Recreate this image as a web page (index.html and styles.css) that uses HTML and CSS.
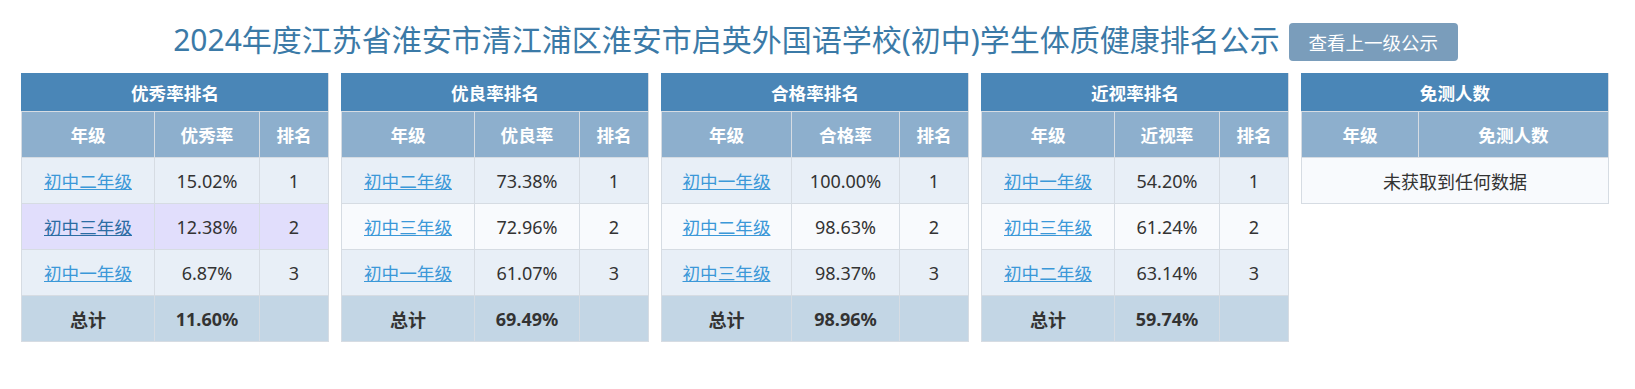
FILE: index.html
```html
<!DOCTYPE html>
<html lang="zh-CN">
<head>
<meta charset="utf-8">
<title>体质健康排名公示</title>
<link rel="stylesheet" href="styles.css">
</head>
<body>
<div class="top">
  <h1 class="title">2024年度江苏省淮安市清江浦区淮安市启英外国语学校(初中)学生体质健康排名公示</h1>
  <a class="btn" href="#">查看上一级公示</a>
</div>
<div class="tables">
  <table class="rank">
    <thead>
      <tr class="cap"><th colspan="3">优秀率排名</th></tr>
      <tr class="sub"><th class="c-grade">年级</th><th>优秀率</th><th class="c-rank">排名</th></tr>
    </thead>
    <tbody>
      <tr class="odd"><td><a href="#">初中二年级</a></td><td>15.02%</td><td>1</td></tr>
      <tr class="hover"><td><a href="#">初中三年级</a></td><td>12.38%</td><td>2</td></tr>
      <tr class="odd"><td><a href="#">初中一年级</a></td><td>6.87%</td><td>3</td></tr>
      <tr class="total"><td>总计</td><td>11.60%</td><td></td></tr>
    </tbody>
  </table>
  <table class="rank">
    <thead>
      <tr class="cap"><th colspan="3">优良率排名</th></tr>
      <tr class="sub"><th class="c-grade">年级</th><th>优良率</th><th class="c-rank">排名</th></tr>
    </thead>
    <tbody>
      <tr class="odd"><td><a href="#">初中二年级</a></td><td>73.38%</td><td>1</td></tr>
      <tr class="even"><td><a href="#">初中三年级</a></td><td>72.96%</td><td>2</td></tr>
      <tr class="odd"><td><a href="#">初中一年级</a></td><td>61.07%</td><td>3</td></tr>
      <tr class="total"><td>总计</td><td>69.49%</td><td></td></tr>
    </tbody>
  </table>
  <table class="rank">
    <thead>
      <tr class="cap"><th colspan="3">合格率排名</th></tr>
      <tr class="sub"><th class="c-grade narrow">年级</th><th>合格率</th><th class="c-rank">排名</th></tr>
    </thead>
    <tbody>
      <tr class="odd"><td><a href="#">初中一年级</a></td><td>100.00%</td><td>1</td></tr>
      <tr class="even"><td><a href="#">初中二年级</a></td><td>98.63%</td><td>2</td></tr>
      <tr class="odd"><td><a href="#">初中三年级</a></td><td>98.37%</td><td>3</td></tr>
      <tr class="total"><td>总计</td><td>98.96%</td><td></td></tr>
    </tbody>
  </table>
  <table class="rank">
    <thead>
      <tr class="cap"><th colspan="3">近视率排名</th></tr>
      <tr class="sub"><th class="c-grade">年级</th><th>近视率</th><th class="c-rank">排名</th></tr>
    </thead>
    <tbody>
      <tr class="odd"><td><a href="#">初中一年级</a></td><td>54.20%</td><td>1</td></tr>
      <tr class="even"><td><a href="#">初中三年级</a></td><td>61.24%</td><td>2</td></tr>
      <tr class="odd"><td><a href="#">初中二年级</a></td><td>63.14%</td><td>3</td></tr>
      <tr class="total"><td>总计</td><td>59.74%</td><td></td></tr>
    </tbody>
  </table>
  <table class="rank exempt">
    <thead>
      <tr class="cap"><th colspan="2">免测人数</th></tr>
      <tr class="sub"><th class="w-grade">年级</th><th>免测人数</th></tr>
    </thead>
    <tbody>
      <tr class="even"><td colspan="2">未获取到任何数据</td></tr>
    </tbody>
  </table>
</div>
</body>
</html>
```
FILE: styles.css
```css
html, body {
  margin: 0;
  padding: 0;
  background: #ffffff;
}
body {
  font-family: "Noto Sans", "Noto Sans CJK SC", sans-serif;
  color: #333333;
}
.top {
  display: flex;
  justify-content: center;
  align-items: flex-start;
  gap: 9px;
  margin-top: 23px;
  height: 38px;
  padding-right: 4px;
}
.title {
  margin: 0;
  font-size: 30px;
  line-height: 34px;
  font-weight: normal;
  color: #3b7aa7;
  white-space: nowrap;
}
.btn {
  display: inline-flex;
  align-items: center;
  justify-content: center;
  width: 169px;
  height: 38px;
  box-sizing: border-box;
  background: #7a9dbb;
  color: #ffffff;
  font-size: 18.5px;
  text-decoration: none;
  border-radius: 4px;
}
.tables {
  display: flex;
  align-items: flex-start;
  gap: 12px;
  margin-top: 12px;
  padding-left: 21px;
}
.rank {
  flex: 0 0 308px;
  width: 308px;
  border-collapse: collapse;
  font-size: 17.6px;
  border: 1px solid #d6dce3;
}
.rank th, .rank td {
  border: 1px solid #d6dce3;
  text-align: center;
  padding: 0 6px;
}
.c-grade {
  width: 120px;
}
.c-grade.narrow {
  width: 117px;
}
.c-rank {
  width: 56px;
}
.cap th {
  background: #4a86b7;
  color: #ffffff;
  height: 37px;
  font-weight: bold;
  border-color: #4a86b7 #d6dce3 #d6dce3 #4a86b7;
}
.sub th {
  background: #8dafcd;
  color: #ffffff;
  height: 45px;
  font-weight: bold;
}
.rank td {
  height: 45px;
  font-size: 18px;
}
.rank td a {
  font-size: 17.6px;
}
.odd td { background: #e8eff7; }
.even td { background: #f8fafd; }
.hover td { background: #e1defc; }
.total td {
  background: #c3d6e5;
  font-weight: bold;
  color: #333333;
}
.rank a {
  color: #3b98d8;
  text-decoration: underline;
}
.hover a {
  color: #2b6ca3;
}
.w-grade {
  width: 104px;
}
```
